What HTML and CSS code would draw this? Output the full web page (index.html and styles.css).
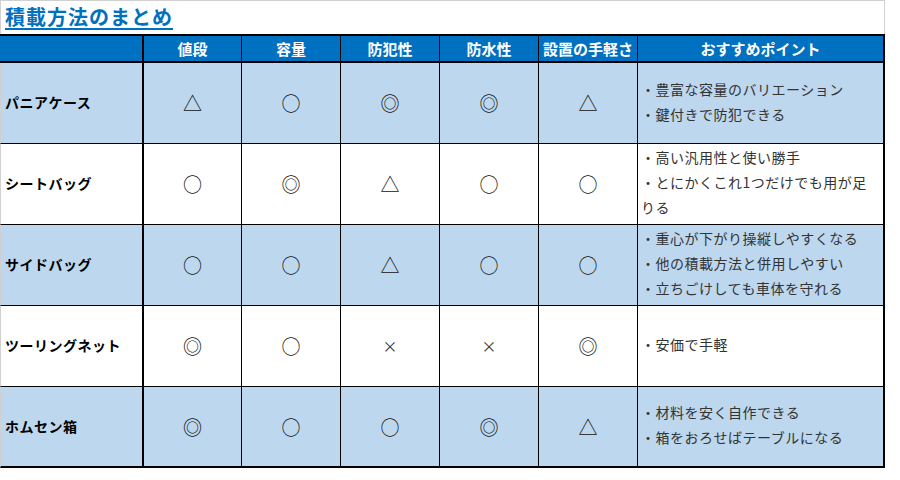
FILE: index.html
```html
<!DOCTYPE html>
<html lang="ja">
<head>
<meta charset="utf-8">
<title>積載方法のまとめ</title>
<link rel="stylesheet" href="styles.css">
</head>
<body>
<div class="sheet">
  <div class="title-bar"><h1 class="title">積載方法のまとめ</h1></div>
  <table class="summary">
    <thead>
      <tr>
        <th class="col-name"></th>
        <th class="col-a">値段</th>
        <th class="col-b">容量</th>
        <th class="col-b">防犯性</th>
        <th class="col-b">防水性</th>
        <th class="col-b">設置の手軽さ</th>
        <th class="col-point">おすすめポイント</th>
      </tr>
    </thead>
    <tbody>
      <tr class="shade">
        <td class="name">パニアケース</td>
        <td class="mark">△</td>
        <td class="mark">○</td>
        <td class="mark">◎</td>
        <td class="mark">◎</td>
        <td class="mark">△</td>
        <td class="point"><div>・豊富な容量のバリエーション</div><div>・鍵付きで防犯できる</div></td>
      </tr>
      <tr>
        <td class="name">シートバッグ</td>
        <td class="mark">○</td>
        <td class="mark">◎</td>
        <td class="mark">△</td>
        <td class="mark">○</td>
        <td class="mark">○</td>
        <td class="point"><div>・高い汎用性と使い勝手</div><div>・とにかくこれ1つだけでも用が足りる</div></td>
      </tr>
      <tr class="shade">
        <td class="name">サイドバッグ</td>
        <td class="mark">○</td>
        <td class="mark">○</td>
        <td class="mark">△</td>
        <td class="mark">○</td>
        <td class="mark">○</td>
        <td class="point"><div>・重心が下がり操縦しやすくなる</div><div>・他の積載方法と併用しやすい</div><div>・立ちごけしても車体を守れる</div></td>
      </tr>
      <tr>
        <td class="name">ツーリングネット</td>
        <td class="mark">◎</td>
        <td class="mark">○</td>
        <td class="mark cross">×</td>
        <td class="mark cross">×</td>
        <td class="mark">◎</td>
        <td class="point"><div>・安価で手軽</div></td>
      </tr>
      <tr class="shade last">
        <td class="name">ホムセン箱</td>
        <td class="mark">◎</td>
        <td class="mark">○</td>
        <td class="mark">○</td>
        <td class="mark">◎</td>
        <td class="mark">△</td>
        <td class="point"><div>・材料を安く自作できる</div><div>・箱をおろせばテーブルになる</div></td>
      </tr>
    </tbody>
  </table>
</div>
</body>
</html>
```
FILE: styles.css
```css
html, body {
  margin: 0;
  padding: 0;
  background: #ffffff;
}

body {
  font-family: "Noto Sans CJK JP", "Noto Sans", sans-serif;
  color: #000;
}

.sheet {
  width: 885px;
}

.title-bar {
  box-sizing: border-box;
  height: 34px;
  border-top: 1px solid #d0d0d0;
  border-left: 1px solid #d0d0d0;
  border-right: 1px solid #d0d0d0;
  padding-left: 4px;
}

.title {
  margin: 0;
  font-size: 20px;
  line-height: 32px;
  font-weight: 700;
  letter-spacing: 1px;
  color: #0070c0;
  text-decoration: underline;
  text-decoration-thickness: 1.5px;
  text-underline-offset: 3px;
}

.summary {
  border-collapse: separate;
  border-spacing: 0;
  table-layout: fixed;
  width: 885px;
}

.summary th,
.summary td {
  box-sizing: border-box;
  padding: 0;
  border-right: 1px solid #000;
  border-bottom: 1px solid #000;
  vertical-align: middle;
}

.summary th {
  height: 29px;
  background: #0070c0;
  color: #fff;
  font-size: 15px;
  font-weight: 700;
  line-height: 20px;
  text-align: center;
  border-top: 2px solid #000;
  border-bottom: 2px solid #000;
  white-space: nowrap;
}

.col-name { width: 144px; }
.col-a { width: 98px; }
.col-b { width: 99px; }
.col-point { width: 247px; }

.summary th.col-name,
.summary td.name {
  border-right-width: 2px;
}

.summary td.name {
  border-left: 1px solid #d0d0d0;
  padding: 0 0 2px 4px;
  font-size: 14px;
  font-weight: 700;
  letter-spacing: 0.5px;
  white-space: nowrap;
}

.summary th.col-point,
.summary td.point {
  border-right-width: 2px;
}

.summary td {
  height: 81px;
}

.summary tr.shade td {
  background: #bdd7ee;
}

.summary tr.last td {
  border-bottom-width: 2px;
}

.summary td.mark {
  text-align: center;
  font-size: 19px;
  line-height: 1;
  color: #111;
  padding-bottom: 1px;
}

.summary td.cross {
  font-size: 15px;
  color: #333;
}

.summary td.point {
  padding: 0 10px 3px 3px;
  font-size: 14px;
  letter-spacing: 0.5px;
  line-height: 25px;
  color: #333;
}
```
